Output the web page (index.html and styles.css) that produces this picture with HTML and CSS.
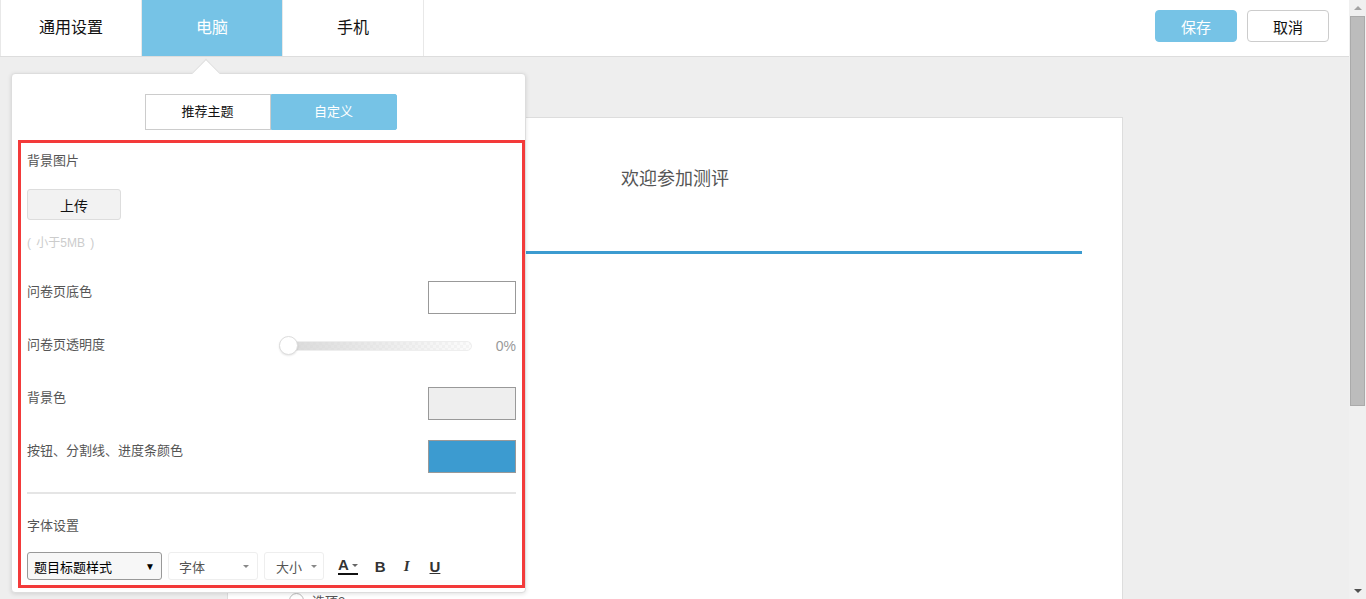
FILE: index.html
```html
<!DOCTYPE html>
<html lang="zh-CN">
<head>
    <meta charset="UTF-8">
    <meta name="viewport" content="width=device-width, initial-scale=1.0">
    <title>主题设置</title>
    <link rel="stylesheet" href="styles.css">
</head>
<body>
    <div class="app">
        <div class="main">
            <div class="topbar">
                <div class="tabs">
                    <div class="tab first">通用设置</div>
                    <div class="tab active">电脑</div>
                    <div class="tab">手机</div>
                </div>
                <div class="actions">
                    <button class="btn primary">保存</button>
                    <button class="btn">取消</button>
                </div>
            </div>

            <div class="stage">
                <div class="card">
                    <div class="card-title">欢迎参加测评</div>
                    <div class="card-line"></div>
                    <div class="option"><span class="radio"></span>选项2</div>
                </div>

                <div class="popover">
                    <div class="arrow"></div>
                    <div class="segment">
                        <div class="seg">推荐主题</div>
                        <div class="seg active">自定义</div>
                    </div>

                    <div class="custom">
                        <div class="label first">背景图片</div>
                        <button class="upload">上传</button>
                        <div class="note">( 小于5MB )</div>

                        <div class="row first">
                            <div class="label">问卷页底色</div>
                            <div class="swatch"></div>
                        </div>
                        <div class="row">
                            <div class="label">问卷页透明度</div>
                            <div class="slider-wrap">
                                <div class="slider"><span class="knob"></span></div>
                                <span class="percent">0%</span>
                            </div>
                        </div>
                        <div class="row">
                            <div class="label">背景色</div>
                            <div class="swatch gray"></div>
                        </div>
                        <div class="row">
                            <div class="label">按钮、分割线、进度条颜色</div>
                            <div class="swatch blue"></div>
                        </div>

                        <div class="divider"></div>

                        <div class="label font-title">字体设置</div>
                        <div class="toolbar">
                            <div class="select">题目标题样式<span class="tri">▼</span></div>
                            <div class="drop font">字体<span class="caret"></span></div>
                            <div class="drop size">大小<span class="caret"></span></div>
                            <div class="tool color">A<span class="caret dark"></span></div>
                            <div class="tool bold">B</div>
                            <div class="tool italic">I</div>
                            <div class="tool under">U</div>
                        </div>
                    </div>
                </div>
            </div>
        </div>

        <div class="scrollbar">
            <span class="arrow-up"></span>
            <div class="thumb"></div>
            <div class="track"></div>
            <span class="arrow-down"></span>
        </div>
    </div>
</body>
</html>
```

FILE: styles.css
```css
* {
    box-sizing: border-box;
}

body {
    margin: 0;
    background-color: #eee;
    font-family: "Liberation Sans", "Noto Sans CJK SC", sans-serif;
    color: #333;
    overflow: hidden;
}

.app {
    display: flex;
    height: 599px;
}

.main {
    flex: 1;
    display: flex;
    flex-direction: column;
    min-width: 0;
}

/* top bar */
.topbar {
    height: 57px;
    background-color: #fff;
    border-bottom: 1px solid #ddd;
    display: flex;
    justify-content: space-between;
    align-items: flex-start;
}

.tabs {
    display: flex;
}

.tab {
    width: 141px;
    height: 56px;
    line-height: 56px;
    text-align: center;
    font-size: 16px;
    color: #111;
    border-right: 1px solid #e8e8e8;
}

.tab.first {
    width: 142px;
    border-left: 1px solid #e8e8e8;
}

.tab.active {
    background-color: #76c3e6;
    color: #fff;
}

.actions {
    display: flex;
    gap: 10px;
    padding: 10px 20px 0 0;
}

.btn {
    width: 82px;
    height: 32px;
    border: 1px solid #ccc;
    border-radius: 4px;
    background-color: #fff;
    font-family: inherit;
    font-size: 15px;
    color: #111;
}

.btn.primary {
    background-color: #76c3e6;
    border-color: #76c3e6;
    color: #fff;
}

/* preview */
.stage {
    flex: 1;
    position: relative;
    overflow: hidden;
}

.card {
    width: 896px;
    height: 800px;
    margin: 60px 0 0 227px;
    background-color: #fff;
    border: 1px solid #ddd;
    padding: 0 40px;
}

.card-title {
    margin-top: 49px;
    text-align: center;
    font-size: 18px;
    line-height: 24px;
    color: #555;
}

.card-line {
    height: 3px;
    margin-top: 60px;
    background-color: #3c9bd0;
}

.option {
    display: flex;
    align-items: center;
    gap: 8px;
    margin: 337px 0 0 21px;
    font-size: 13px;
    color: #555;
}

.radio {
    width: 15px;
    height: 15px;
    border: 1px solid #bbb;
    border-radius: 50%;
}

/* popover */
.popover {
    position: absolute;
    left: 11px;
    top: 16px;
    width: 515px;
    background-color: #fff;
    border: 1px solid #ddd;
    border-radius: 4px;
    box-shadow: 0 1px 4px rgba(0, 0, 0, 0.12);
    padding: 20px 0 4px 6px;
}

.arrow {
    position: absolute;
    left: 184px;
    top: -11px;
    width: 20px;
    height: 20px;
    background-color: #fff;
    border-top: 1px solid #ddd;
    border-left: 1px solid #ddd;
    transform: rotate(45deg);
}

.segment {
    display: flex;
    justify-content: center;
    margin: 0 0 10px -2px;
}

.seg {
    width: 126px;
    height: 36px;
    line-height: 34px;
    text-align: center;
    font-size: 13px;
    color: #111;
    border: 1px solid #ccc;
}

.seg.active {
    background-color: #76c3e6;
    border-color: #76c3e6;
    color: #fff;
    border-radius: 0 2px 2px 0;
}

.custom {
    width: 507px;
    border: 3px solid #f33a3a;
    padding: 0 6px 5px;
}

.label {
    font-size: 13px;
    line-height: 20px;
    color: #555;
}

.label.first {
    margin-top: 8px;
}

.upload {
    display: block;
    width: 94px;
    height: 31px;
    margin-top: 18px;
    background-color: #f2f2f2;
    border: 1px solid #ddd;
    border-radius: 3px;
    font-family: inherit;
    font-size: 14px;
    color: #111;
}

.note {
    margin-top: 14px;
    font-size: 12px;
    line-height: 18px;
    color: #ccc;
    word-spacing: 2px;
}

.row {
    display: flex;
    justify-content: space-between;
    align-items: flex-start;
    height: 33px;
    margin-top: 20px;
}

.row.first {
    margin-top: 29px;
}

.row .label {
    padding-top: 1px;
}

.swatch {
    width: 88px;
    height: 33px;
    border: 1px solid #999;
    background-color: #fff;
}

.swatch.gray {
    background-color: #eee;
}

.swatch.blue {
    background-color: #3c9bd0;
}

.slider-wrap {
    display: flex;
    align-items: center;
    gap: 24px;
    height: 24px;
}

.slider {
    position: relative;
    width: 193px;
    height: 10px;
    border: 1px solid #eee;
    border-radius: 5px;
    background:
        linear-gradient(to right, rgba(215, 215, 215, 0.95), rgba(250, 250, 250, 0.7)),
        repeating-conic-gradient(#e8e8e8 0 25%, #fff 0 50%) 0 0 / 6px 6px;
}

.knob {
    position: absolute;
    left: -1px;
    top: -6px;
    width: 19px;
    height: 19px;
    border: 1px solid #ddd;
    border-radius: 50%;
    background-color: #fff;
    box-shadow: 0 1px 2px rgba(0, 0, 0, 0.1);
}

.percent {
    font-size: 14px;
    color: #999;
}

.divider {
    height: 2px;
    margin-top: 19px;
    background-color: #e5e5e5;
}

.label.font-title {
    margin-top: 22px;
}

.toolbar {
    display: flex;
    align-items: center;
    height: 28px;
    margin-top: 16px;
}

.select {
    display: flex;
    justify-content: space-between;
    align-items: center;
    width: 135px;
    height: 28px;
    padding: 0 6px;
    border: 1px solid #999;
    border-radius: 3px;
    background-color: #f7f7f7;
    font-size: 13px;
    color: #000;
}

.tri {
    font-size: 10px;
}

.drop {
    display: flex;
    justify-content: space-between;
    align-items: center;
    height: 28px;
    margin-left: 6px;
    border: 1px solid #eee;
    border-radius: 3px;
    font-size: 13px;
    color: #555;
}

.drop.font {
    width: 90px;
    padding: 0 8px 0 10px;
}

.drop.size {
    width: 60px;
    padding: 0 6px 0 11px;
}

.caret {
    width: 0;
    height: 0;
    border-left: 3px solid transparent;
    border-right: 3px solid transparent;
    border-top: 3px solid #888;
}

.caret.dark {
    margin-left: 3px;
    border-top-color: #666;
}

.tool {
    display: flex;
    align-items: center;
    font-size: 15px;
    font-weight: bold;
    color: #333;
    font-family: "Liberation Sans", sans-serif;
}

.tool.color {
    margin-left: 14px;
    border-bottom: 2px solid #111;
    line-height: 16px;
}

.tool.bold {
    margin-left: 17px;
}

.tool.italic {
    margin-left: 18px;
    font-style: italic;
    font-family: "Liberation Serif", serif;
}

.tool.under {
    margin-left: 20px;
    text-decoration: underline;
}

/* fake scrollbar */
.scrollbar {
    width: 17px;
    background-color: #f0f0f0;
    display: flex;
    flex-direction: column;
    align-items: center;
}

.arrow-up,
.arrow-down {
    width: 0;
    height: 0;
    border-left: 4px solid transparent;
    border-right: 4px solid transparent;
    margin: 6px 0;
}

.arrow-up {
    border-bottom: 4px solid #a3a3a3;
}

.arrow-down {
    border-top: 4px solid #505050;
}

.thumb {
    width: 15px;
    height: 390px;
    background-color: #bcbcbc;
    border: 1px solid #aaa;
}

.track {
    flex: 1;
}
```
